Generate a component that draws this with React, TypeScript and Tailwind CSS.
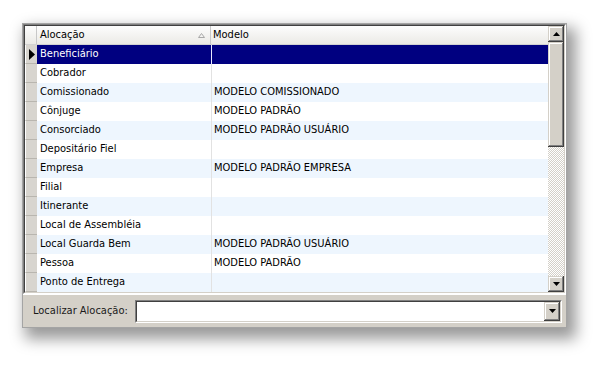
const rows: [string, string][] = [
  ["Beneficiário", ""],
  ["Cobrador", ""],
  ["Comissionado", "MODELO COMISSIONADO"],
  ["Cônjuge", "MODELO PADRÃO"],
  ["Consorciado", "MODELO PADRÃO USUÁRIO"],
  ["Depositário Fiel", ""],
  ["Empresa", "MODELO PADRÃO EMPRESA"],
  ["Filial", ""],
  ["Itinerante", ""],
  ["Local de Assembléia", ""],
  ["Local Guarda Bem", "MODELO PADRÃO USUÁRIO"],
  ["Pessoa", "MODELO PADRÃO"],
  ["Ponto de Entrega", ""],
];

function Arrow({ up }: { up?: boolean }) {
  return (
    <svg width="7" height="4" viewBox="0 0 7 4">
      <polygon points={up ? "3.5,0 7,4 0,4" : "0,0 7,0 3.5,4"} fill="#000" />
    </svg>
  );
}

function ScrollButton({ up }: { up?: boolean }) {
  return (
    <div className="flex h-[16px] w-[16px] items-center justify-center bg-[#d4d0c8] shadow-[inset_-1px_-1px_#404040,inset_1px_1px_#d4d0c8,inset_-2px_-2px_#808080,inset_2px_2px_#fff]">
      <Arrow up={up} />
    </div>
  );
}

export default function App() {
  return (
    <div className="h-[371px] w-[611px] bg-white pl-[22px] pt-[23px] font-['DejaVu_Sans_Condensed','DejaVu_Sans',sans-serif] text-[11px] text-black">
      <div className="flex h-[305px] w-[545px] flex-col border border-[#a4a4a4] bg-[#d4d0c8] shadow-[6px_8px_14px_3px_rgba(0,0,0,0.4)]">
        {/* grid */}
        <div className="h-[270px] border border-t-[#808080] border-l-[#808080] border-r-white border-b-white">
          <div className="flex h-full border border-t-[#404040] border-l-[#404040] border-r-[#d4d0c8] border-b-[#d4d0c8] bg-white">
            <div className="flex flex-1 flex-col">
              {/* header */}
              <div className="flex h-[19px] border-b border-[#d2d2d2] bg-gradient-to-b from-[#fdfdfd] to-[#ebeae6]">
                <div className="w-[12px] border-r border-[#c8c8c8]" />
                <div className="flex w-[174px] items-center justify-between border-r border-[#c8c8c8] pl-[3px] pr-[5px]">
                  <span>Alocação</span>
                  <svg width="7" height="5" viewBox="0 0 7 5">
                    <polygon points="3.5,0.5 6.5,4.5 0.5,4.5" fill="none" stroke="#a8a8a8" strokeWidth="1" />
                  </svg>
                </div>
                <div className="flex flex-1 items-center pl-[2px]">Modelo</div>
              </div>
              {rows.map(([a, m], i) => {
                const sel = i === 0;
                const bg = sel ? "bg-[#000080] text-white" : i % 2 === 0 ? "bg-[#eef6fe]" : "bg-white";
                return (
                  <div key={a} className="flex h-[19px]">
                    <div className="flex w-[12px] items-center justify-center border-b border-l border-b-[#b9b6af] border-l-white bg-[#d8d5cf]">
                      {sel && (
                        <svg width="6" height="11" viewBox="0 0 6 11">
                          <polygon points="0,0 6,5.5 0,11" fill="#000" />
                        </svg>
                      )}
                    </div>
                    <div className={`flex w-[174px] items-center pl-[3px] ${bg}`}>{a}</div>
                    <div
                      className={`flex flex-1 items-center border-l pl-[2px] ${bg} ${sel ? "border-[#e8e8ff]" : "border-[#e2e2e2]"}`}
                    >
                      {m}
                    </div>
                  </div>
                );
              })}
            </div>
            {/* scrollbar */}
            <div className="flex w-[16px] flex-col bg-[repeating-conic-gradient(#d4d0c8_0_25%,#fff_0_50%)] bg-[length:2px_2px]">
              <ScrollButton up />
              <div className="h-[105px] bg-[#d4d0c8] shadow-[inset_-1px_-1px_#404040,inset_1px_1px_#d4d0c8,inset_-2px_-2px_#808080,inset_2px_2px_#fff]" />
              <div className="flex-1" />
              <ScrollButton />
            </div>
          </div>
        </div>
        {/* search panel */}
        <div className="flex flex-1 items-center border-t border-white pl-[10px] pr-[4px]">
          <span className="mr-[7px] text-[#1a1a1a]">Localizar Alocação:</span>
          <div className="flex h-[23px] flex-1 border border-t-[#808080] border-l-[#808080] border-r-white border-b-white">
            <div className="flex flex-1 justify-end border border-t-[#404040] border-l-[#404040] border-r-[#d4d0c8] border-b-[#d4d0c8] bg-white">
              <div className="flex h-[19px] w-[16px] items-center justify-center bg-[#d4d0c8] shadow-[inset_-1px_-1px_#404040,inset_1px_1px_#d4d0c8,inset_-2px_-2px_#808080,inset_2px_2px_#fff]">
                <Arrow />
              </div>
            </div>
          </div>
        </div>
      </div>
    </div>
  );
}
